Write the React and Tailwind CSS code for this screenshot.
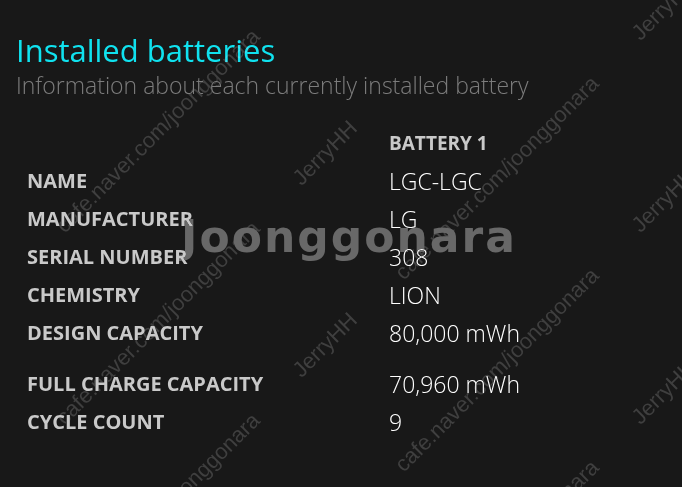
import React from 'react'

const rows = [
  { label: 'NAME', value: 'LGC-LGC' },
  { label: 'MANUFACTURER', value: 'LG' },
  { label: 'SERIAL NUMBER', value: '308' },
  { label: 'CHEMISTRY', value: 'LION' },
  { label: 'DESIGN CAPACITY', value: '80,000 mWh' },
  { label: 'FULL CHARGE CAPACITY', value: '70,960 mWh', spaced: true },
  { label: 'CYCLE COUNT', value: '9' },
]

// watermark tiles: two columns, offset by (339, 47), repeating every 192px
const marks = []
for (let col = 0; col < 2; col++) {
  for (let k = -1; k < 3; k++) {
    const dx = col * 339
    const dy = col * 47 + k * 192
    if (k >= 0) marks.push({ text: 'cafe.naver.com/joonggonara', x: 158 + dx, y: 131 + dy })
    if ((k >= 0 && k < 2) || col === 1) marks.push({ text: 'JerryHH', x: 325 + dx, y: 153 + dy })
  }
}

function Watermarks() {
  return (
    <div className="pointer-events-none absolute inset-0 overflow-hidden mix-blend-lighten">
      {marks.map((m, i) => (
        <span
          key={i}
          className="absolute -translate-x-1/2 -translate-y-1/2 -rotate-45 whitespace-nowrap text-[22px] leading-none text-[#3f3f3f]"
          style={{ left: m.x, top: m.y, fontFamily: '"Liberation Sans", Arial, sans-serif' }}
        >
          {m.text}
        </span>
      ))}
      <span
        className="absolute left-[349px] top-[237px] -translate-x-1/2 -translate-y-1/2 whitespace-nowrap text-[44px] font-bold leading-none tracking-[2px] text-[#686868]"
        style={{ fontFamily: '"DejaVu Sans", sans-serif' }}
      >
        Joonggonara
      </span>
    </div>
  )
}

export default function App() {
  return (
    <div
      className="relative h-[487px] w-[682px] overflow-hidden bg-[#181818]"
      style={{ fontFamily: '"Open Sans", "Noto Sans", sans-serif' }}
    >
      <div className="px-4 pt-[30px]">
        <h1 className="text-[31px] leading-[40px] text-[#10e2ef]">Installed batteries</h1>
        <p className="text-[23px] font-light leading-[30px] text-[#7c7c7c]">
          Information about each currently installed battery
        </p>
      </div>

      <div className="mt-[24px] pl-[27px]">
        <div className="grid h-[38px] grid-cols-[362px_1fr] items-center">
          <div />
          <div className="text-[19px] font-bold text-[#c9c9c9]">BATTERY 1</div>
        </div>
        {rows.map((r) => (
          <div
            key={r.label}
            className={`grid h-[38px] grid-cols-[362px_1fr] items-center ${r.spaced ? 'mt-[13px]' : ''}`}
          >
            <div className="text-[20px] font-bold text-[#c9c9c9]">{r.label}</div>
            <div className="text-[23px] font-light text-white">{r.value}</div>
          </div>
        ))}
      </div>

      <Watermarks />
    </div>
  )
}
